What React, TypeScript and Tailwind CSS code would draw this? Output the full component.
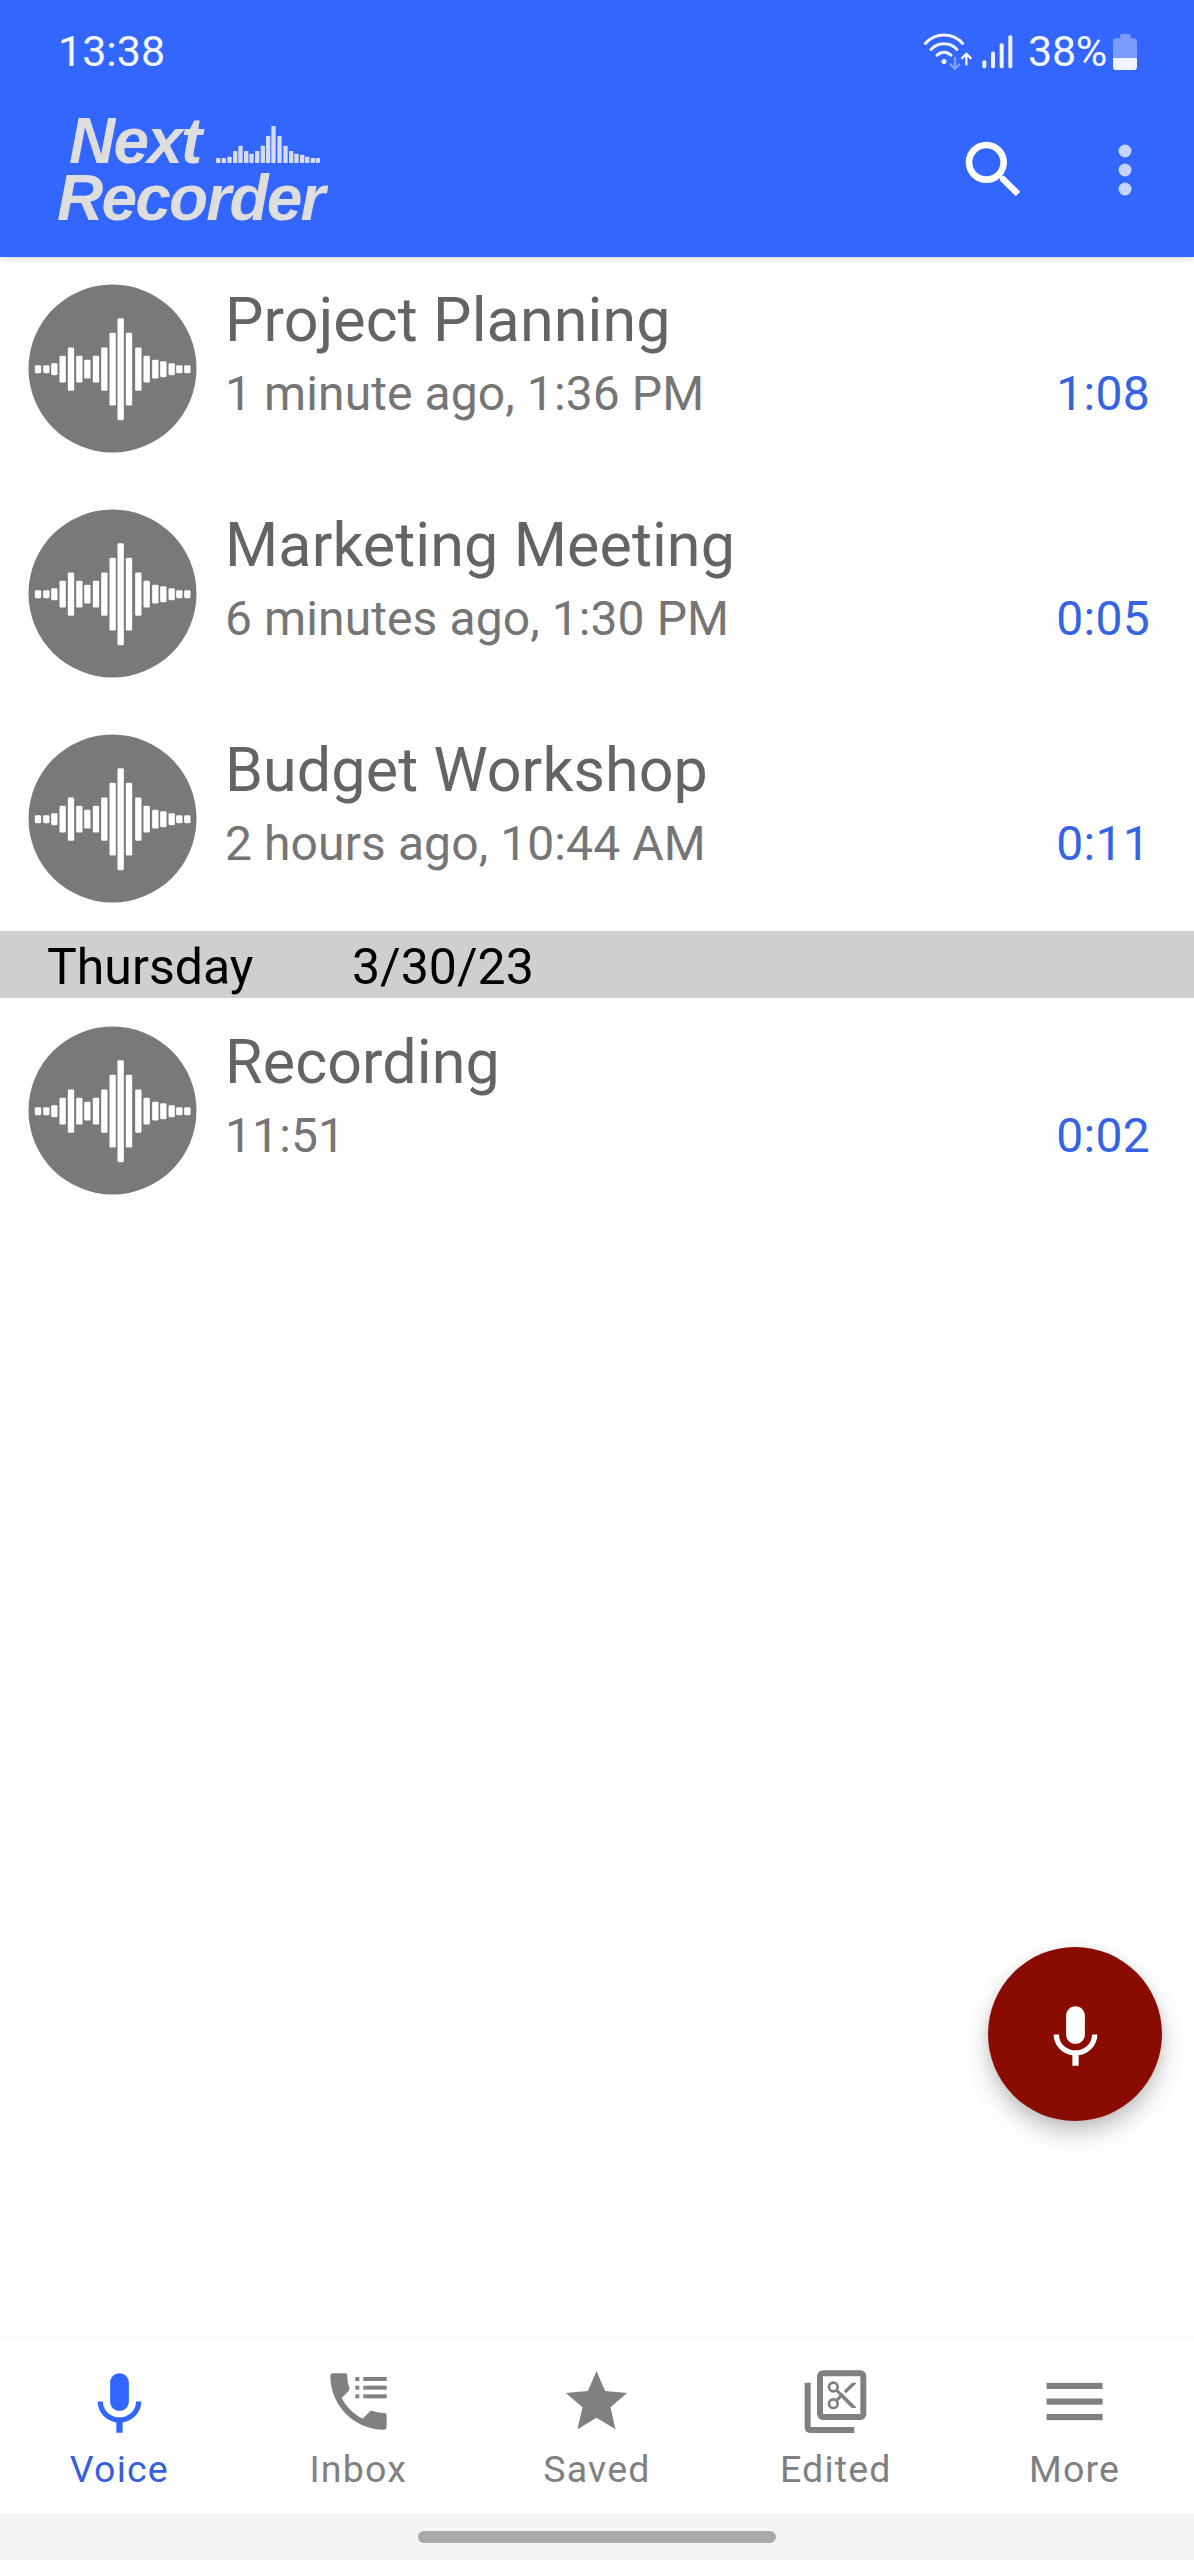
import type { ReactNode } from "react";

interface Recording {
  title: string;
  when: string;
  duration: string;
}

const today: Recording[] = [
  { title: "Project Planning", when: "1 minute ago, 1:36 PM", duration: "1:08" },
  { title: "Marketing Meeting", when: "6 minutes ago, 1:30 PM", duration: "0:05" },
  { title: "Budget Workshop", when: "2 hours ago, 10:44 AM", duration: "0:11" },
];

const thursday: Recording[] = [{ title: "Recording", when: "11:51", duration: "0:02" }];

// [x, height] of every bar of the wave form
const waveBars = [
  [19, 24], [44, 24], [68, 36], [93, 80], [118, 130], [143, 80], [167, 56], [193, 80], [218, 130], [243, 218],
  [267, 306], [292, 218], [320, 130], [345, 80], [371, 56], [395, 48], [420, 36], [443, 24], [467, 24],
];

const logoBars = [
  [0, 15], [17, 15], [34, 19], [51, 36], [67, 52], [84, 36], [100, 28], [117, 36], [134, 52], [150, 81],
  [166, 111], [184, 81], [202, 52], [219, 36], [235, 28], [252, 25], [267, 19], [284, 15], [299, 15],
];

function WaveAvatar() {
  return (
    <svg viewBox="-1.5 -1.5 507 507" className="size-[169px] shrink-0">
      <circle cx="252" cy="252" r="252" fill="#797977" />
      {waveBars.map(([x, h]) => (
        <rect key={x} x={x} y={254 - h / 2} width="19" height={h} rx="4" fill="#fff" />
      ))}
    </svg>
  );
}

function MicIcon() {
  return (
    <svg viewBox="0 0 24 24" className="size-[75px]" fill="currentColor">
      <path d="M12 14c1.66 0 2.99-1.34 2.99-3L15 5c0-1.66-1.34-3-3-3S9 3.34 9 5v6c0 1.66 1.34 3 3 3zm5.3-3c0 3-2.54 5.1-5.3 5.1S6.7 14 6.7 11H5c0 3.41 2.72 6.23 6 6.72V21h2v-3.28c3.28-.48 6-3.3 6-6.72h-1.7z" />
    </svg>
  );
}

function InboxIcon() {
  return (
    <svg viewBox="962 141 225 225" className="size-[75px]" fill="currentColor">
      <path d="M990 167Q990 160 997 160H1034Q1041 160 1041 167C1041 180 1043 192 1047 203Q1048 208 1045 213L1024 234C1038 260 1058 281 1087 296L1108 275Q1112 271 1117 273C1128 277 1140 279 1152 279Q1159 279 1159 286V322Q1159 329 1152 329C1062 329 990 257 990 167Z" />
      {[171, 197, 223].map((y) => (
        <g key={y}>
          <rect x="1065" y={y} width="12" height="12" />
          <rect x="1089" y={y} width="70" height="12" />
        </g>
      ))}
    </svg>
  );
}

function StarIcon() {
  return (
    <svg viewBox="238.5 141 225 225" className="size-[75px]" fill="currentColor">
      <path d="M351 153L377 213L443 219L393 262L408 328L351 293L294 328L309 262L259 219L325 213Z" />
    </svg>
  );
}

function EditedIcon() {
  return (
    <svg viewBox="955 141 225 225" className="size-[75px]" fill="none" stroke="currentColor">
      <rect x="1021" y="160" width="130" height="131" rx="9" strokeWidth="18" />
      <path d="M984 188V322Q984 330 992 330H1124" strokeWidth="18" />
      <circle cx="1061" cy="201" r="13" strokeWidth="8" />
      <circle cx="1061" cy="251" r="13" strokeWidth="8" />
      <path d="M1070 210L1084 224M1070 242L1084 228" strokeWidth="9" />
      <path d="M1078 226L1086 218L1129 261V264H1116Z" fill="currentColor" stroke="none" />
      <path d="M1092 213L1117 188H1129V191L1099 220Z" fill="currentColor" stroke="none" />
    </svg>
  );
}

function MenuIcon() {
  return (
    <svg viewBox="411.3 141 225 225" className="size-[75px]" fill="currentColor">
      <rect x="440" y="188.5" width="168" height="18.5" />
      <rect x="440" y="235.5" width="168" height="18.5" />
      <rect x="440" y="282" width="168" height="18.5" />
    </svg>
  );
}

function StatusBar() {
  return (
    <div className="flex h-[104px] items-center px-[57px] text-[43px] leading-[102px] text-[#f4f7ff]">
      <span className="-mt-0.5 pl-px">13:38</span>
      <svg viewBox="120 90 282 125" className="ml-auto h-[42px] w-[94px]" fill="none" strokeLinecap="round">
        <g stroke="#f0f4ff" strokeWidth="9">
          <path d="M133 127C163 93 215 93 245 127" />
          <path d="M150 145C171 122 207 122 228 145" />
          <path d="M168 162C180 150 198 150 210 162" />
        </g>
        <circle cx="189" cy="181" r="7.5" fill="#f0f4ff" />
        <path d="M222 170V202M209 190L222 203L235 190" stroke="#84a2ff" strokeWidth="7" />
        <path d="M256 190V159M243 171L256 158L269 171" stroke="#f0f4ff" strokeWidth="7" />
        <g fill="#f0f4ff">
          <rect x="304" y="177" width="12" height="24" rx="5" />
          <rect x="330" y="151" width="12" height="50" rx="5" />
          <rect x="356" y="126" width="12" height="75" rx="5" />
          <rect x="382" y="102" width="12" height="99" rx="5" />
        </g>
      </svg>
      <span className="-mt-0.5 ml-[13px] tracking-[-0.3px]">38%</span>
      <svg viewBox="699 99 72 108" className="ml-[6px] h-9 w-6">
        <path d="M720 112V105Q720 99 726 99H746Q752 99 752 105V112H761Q771 112 771 122V171H699V122Q699 112 709 112Z" fill="#7b9bff" />
        <path d="M699 171H771V197Q771 207 761 207H709Q699 207 699 197Z" fill="#f0f3ff" />
      </svg>
    </div>
  );
}

function AppBar() {
  return (
    <div className="flex h-[153px] items-start pl-[57px] pr-[59px]">
      <div className="pt-[9px] font-['Liberation_Sans',Arial,sans-serif] text-[64px] leading-[57px] font-bold tracking-[-1.8px] text-[#dedede] italic">
        <div className="flex items-end pl-[12px]">
          <span>Next</span>
          <svg viewBox="0 0 312 111" className="mb-[7px] ml-[15px] h-[37px] w-[104px]" fill="#d5dcf4">
            {logoBars.map(([x, h]) => (
              <rect key={x} x={x} y={111 - h} width="13" height={h} rx="2" />
            ))}
          </svg>
        </div>
        <div>Recorder</div>
      </div>
      <svg viewBox="250 420 174 174" className="mt-9 ml-auto size-[58px]" fill="none" stroke="#fff">
        <circle cx="317" cy="487" r="52" strokeWidth="20" />
        <path d="M363 533L412 582" strokeWidth="19" />
        <path d="M353 523L366 536" strokeWidth="10" />
      </svg>
      <svg viewBox="704 424 60 174" className="mt-[37px] ml-[93px] h-[58px] w-5" fill="#c6d3fc">
        <circle cx="734" cy="454" r="19.5" />
        <circle cx="734" cy="511" r="19.5" />
        <circle cx="734" cy="568" r="19.5" />
      </svg>
    </div>
  );
}

function RecordingRow({ title, when, duration }: Recording) {
  return (
    <li className="flex h-[225px] pt-[28px] pr-[44px] pl-[28px]">
      <WaveAvatar />
      <div className="ml-[28px] flex-1">
        <div className="h-[73px] text-[61px] leading-[72px] tracking-[0.1px] text-[#646464]">{title}</div>
        <div className="flex justify-between text-[48px] leading-[73px] tracking-[0.1px] text-[#757575]">
          <span>{when}</span>
          <span className="tracking-[0.3px] text-[#3563e4]">{duration}</span>
        </div>
      </div>
    </li>
  );
}

function NavItem({ label, active, children }: { label: string; active?: boolean; children: ReactNode }) {
  return (
    <button className={`flex flex-1 flex-col items-center pt-[28px] ${active ? "text-[#3366ff]" : "text-[#808080]"}`}>
      {children}
      <span className={`text-[37.5px] leading-[54px] tracking-[1.2px] ${active ? "text-[#355fe0]" : "text-[#808080]"}`}>{label}</span>
    </button>
  );
}

export default function App() {
  return (
    <div className="relative flex h-[2560px] w-[1194px] flex-col overflow-hidden bg-[#fefefe] font-[Roboto,sans-serif]">
      <header className="h-[257px] shrink-0 bg-[#3366ff] shadow-[0_1px_6px_rgba(0,0,0,0.18)]">
        <StatusBar />
        <AppBar />
      </header>

      <main className="flex-1">
        <ul className="-mt-px">
          {today.map((r) => (
            <RecordingRow key={r.title} {...r} />
          ))}
        </ul>
        <h2 className="flex h-[67px] bg-[#cfcfcf] pl-[47px] text-[50px] leading-[73px] text-black">
          <span className="w-[305px]">Thursday</span>
          <span>3/30/23</span>
        </h2>
        <ul>
          {thursday.map((r) => (
            <RecordingRow key={r.title} {...r} />
          ))}
        </ul>
      </main>

      {/* Record button floats over the list */}
      <button className="absolute top-[1947px] left-[988px] flex size-[174px] items-center justify-center rounded-full bg-[#8a0c00] pt-[6px] text-white shadow-[0_12px_22px_rgba(0,0,0,0.22),0_2px_12px_rgba(0,0,0,0.06)]">
        <MicIcon />
      </button>

      <nav className="flex h-[174px] shrink-0 bg-white shadow-[0_-1px_7px_rgba(0,0,0,0.04)]">
        <NavItem label="Voice" active>
          <MicIcon />
        </NavItem>
        <NavItem label="Inbox">
          <InboxIcon />
        </NavItem>
        <NavItem label="Saved">
          <StarIcon />
        </NavItem>
        <NavItem label="Edited">
          <EditedIcon />
        </NavItem>
        <NavItem label="More">
          <MenuIcon />
        </NavItem>
      </nav>
      <div className="flex h-[47px] shrink-0 justify-center bg-[#f5f5f5] pt-[18px]">
        <div className="h-[12px] w-[358px] rounded-full bg-[#a9a9a9]" />
      </div>
    </div>
  );
}
